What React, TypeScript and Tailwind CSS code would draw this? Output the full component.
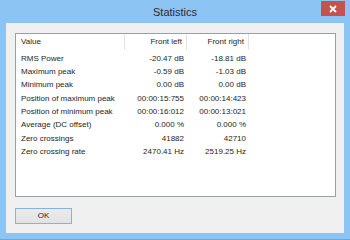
import React from "react";

const rows: [string, string, string][] = [
  ["RMS Power", "-20.47 dB", "-18.81 dB"],
  ["Maximum peak", "-0.59 dB", "-1.03 dB"],
  ["Minimum peak", "0.00 dB", "0.00 dB"],
  ["Position of maximum peak", "00:00:15:755", "00:00:14:423"],
  ["Position of minimum peak", "00:00:16:012", "00:00:13:021"],
  ["Average (DC offset)", "0.000 %", "0.000 %"],
  ["Zero crossings", "41882", "42710"],
  ["Zero crossing rate", "2470.41 Hz", "2519.25 Hz"],
];

export default function App() {
  return (
    <div
      className="flex h-[240px] w-[350px] flex-col bg-[#8cc4f4] border-b border-[#6aa8dc]"
      style={{ fontFamily: '"Liberation Sans", Arial, sans-serif' }}
    >
      {/* Title bar */}
      <div className="relative flex h-[23px] shrink-0 items-center justify-center">
        <span className="pt-[1px] text-[11px] text-[#2b2b2b]">Statistics</span>
        <div className="absolute right-[5px] top-[1px] flex h-[15px] w-[24px] items-center justify-center bg-[#c75050]">
          <svg width="8" height="8" viewBox="0 0 8 8">
            <path d="M1 1 L7 7 M7 1 L1 7" stroke="#fff" strokeWidth="1.8" />
          </svg>
        </div>
      </div>

      {/* Client area */}
      <div className="mx-[6px] mb-[6px] flex flex-1 flex-col bg-[#f0f0f0] px-[9px] pt-[10px]">
        <div className="flex h-[164px] w-[321px] flex-col border border-[#9a9ea6] bg-white text-[8px] text-[#1e1e1e]">
          {/* Header */}
          <div className="flex h-[16px] shrink-0 items-center">
            <div className="flex h-full w-[109px] items-center border-r border-[#e3e3e3] pl-[5px]">Value</div>
            <div className="flex h-full w-[62px] items-center justify-end border-r border-[#e3e3e3] pr-[4px]">Front left</div>
            <div className="flex h-full w-[62px] items-center justify-end border-r border-[#e3e3e3] pr-[4px]">Front right</div>
          </div>
          {/* Rows */}
          <div className="flex flex-col pt-[2px]">
            {rows.map(([label, left, right]) => (
              <div key={label} className="flex h-[13.33px] items-center">
                <div className="w-[110px] pl-[5px]">{label}</div>
                <div className="w-[62px] pr-[4px] text-right">{left}</div>
                <div className="w-[62px] pr-[4px] text-right">{right}</div>
              </div>
            ))}
          </div>
        </div>

        <div className="pt-[11px]">
          <button className="flex h-[16px] w-[57px] items-center justify-center border border-[#7fb4e8] bg-[linear-gradient(#ececec,#e2e2e2)] text-[8px] text-[#1e1e1e]">
            OK
          </button>
        </div>
      </div>
    </div>
  );
}
